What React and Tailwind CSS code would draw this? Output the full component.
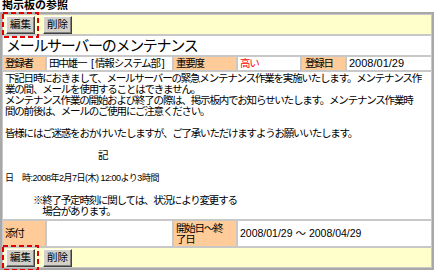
import React from "react";

function Btn({ children }) {
  return (
    <div className="h-[18px] w-[29px] flex items-center justify-center bg-[#d4d0c8] border border-t-white border-l-white border-r-[#404040] border-b-[#404040] shadow-[inset_-1px_-1px_0_#808080] text-[10.5px] leading-none text-black">
      {children}
    </div>
  );
}

function EditBtn() {
  return (
    <div className="relative">
      <Btn>編集</Btn>
      <svg className="absolute -left-[4px] -top-[4px]" width="37" height="26" viewBox="0 0 37 26">
        <rect x="1" y="1" width="35" height="24" fill="none" stroke="#e00000" strokeWidth="2" strokeDasharray="5 3" />
      </svg>
    </div>
  );
}

function ButtonRow() {
  return (
    <div className="h-[21px] border border-[#c8c8c8] bg-[#ffffcc] flex items-center gap-[8px] pl-[3px]">
      <EditBtn />
      <Btn>削除</Btn>
    </div>
  );
}

const cell = "border border-[#c8c8c8]";
const head = "border border-[#c8c8c8] bg-[#ffcc99]";

export default function App() {
  return (
    <div className="w-[436px] h-[270px] bg-white text-black font-['Liberation_Sans','Noto_Sans_CJK_JP',sans-serif] overflow-hidden">
      <div className="pl-[2px] h-[12px] text-[11px] leading-[11px] font-bold">掲示板の参照</div>
      <div className="w-[434px] border-2 border-[#a8a8a8] flex flex-col">
        <ButtonRow />
        <div className={`${cell} h-[21px] flex items-center pl-[3px] text-[15px] tracking-[-1.3px] leading-none`}>
          メールサーバーのメンテナンス
        </div>
        <div className="flex h-[15px] text-[10.5px] tracking-[-1.2px] leading-none">
          <div className={`${head} w-[44px] flex items-center pl-[2px]`}>登録者</div>
          <div className={`${cell} w-[127px] flex items-center pl-[2px] whitespace-pre`}>
            田中雄一<span className="tracking-normal pl-[2px] pr-[1px]"> [</span>情報システム部<span className="tracking-normal pl-[2px]">]</span>
          </div>
          <div className={`${head} w-[64px] flex items-center pl-[2px]`}>重要度</div>
          <div className={`${cell} w-[64px] flex items-center pl-[2px] text-[#ff0000]`}>高い</div>
          <div className={`${head} w-[45px] flex items-center pl-[3px]`}>登録日</div>
          <div className={`${cell} flex-1 flex items-center pl-[2px] text-[11px] tracking-normal`}>2008/01/29</div>
        </div>
        <div className={`${cell} h-[149px] pl-[2px] pt-[1px] text-[10.5px] tracking-[-1.2px] leading-[11px] whitespace-pre`}>
          {"下記日時におきまして、メールサーバーの緊急メンテナンス作業を実施いたします。メンテナンス作\n業の間、メールを使用することはできません。\nメンテナンス作業の開始および終了の際は、掲示板内でお知らせいたします。メンテナンス作業時\n間の前後は、メールのご使用にご注意ください。\n\n皆様にはご迷惑をおかけいたしますが、ご了承いただけますようお願いいたします。\n\n　　　　　　　　　　記\n\n"}
          <span className="text-[9px] tracking-[-0.5px]">{"日　時:2008年2月7日(木) 12:00より3時間"}</span>
          {"\n\n　　　※終了予定時刻に関しては、状況により変更する\n　　　　場合があります。"}
        </div>
        <div className="flex h-[27px] text-[10.5px] tracking-[-1.2px]">
          <div className={`${head} w-[44px] flex items-center pl-[2px]`}>添付</div>
          <div className={`${cell} w-[127px]`}></div>
          <div className={`${head} w-[64px] flex items-center pl-[2px] leading-[11px]`}>
            開始日～終<br />了日
          </div>
          <div className={`${cell} flex-1 flex items-center pl-[2px] text-[10.5px] tracking-normal`}>2008/01/29 ～ 2008/04/29</div>
        </div>
        <ButtonRow />
      </div>
    </div>
  );
}
